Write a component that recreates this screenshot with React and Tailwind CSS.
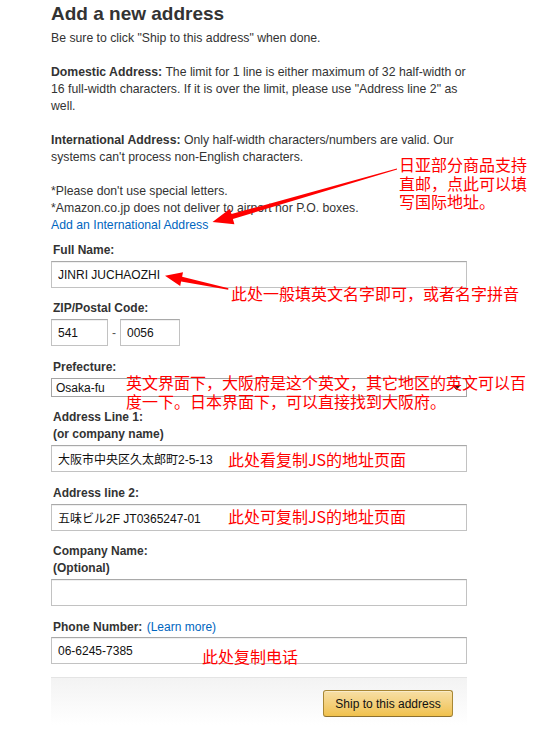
import React from "react";

// label + control block used by every form row
function Field({ label, className = "", children }) {
  return (
    <div className={className}>
      <div className="pl-[2px] text-[12px] font-bold leading-[17px] text-[#333]">{label}</div>
      {children}
    </div>
  );
}

function TextBox({ value, className = "" }) {
  return (
    <input
      readOnly
      value={value}
      className={
        "block h-[27px] border border-[#c2c2c2] border-t-[#a9a9a9] bg-white px-[6px] text-[12px] text-[#111] shadow-[inset_0_1px_0_rgba(0,0,0,0.06)] outline-none " +
        className
      }
    />
  );
}

function Note({ className, children }) {
  return (
    <div
      className={
        "absolute whitespace-nowrap font-['Noto_Sans_CJK_SC',sans-serif] text-[16px] text-[#ff0000] " +
        className
      }
    >
      {children}
    </div>
  );
}

export default function App() {
  return (
    <div className="relative h-[732px] w-[542px] overflow-hidden bg-white font-['Liberation_Sans','Noto_Sans_CJK_JP',sans-serif] text-[#333]">
      <div className="ml-[51px] w-[416px]">
        <h1 className="text-[19px] font-bold leading-[28px] text-[#333]">Add a new address</h1>
        <p className="mt-[2px] text-[12.25px] leading-[17px]">
          Be sure to click "Ship to this address" when done.
        </p>
        <p className="mt-[17px] text-[12.25px] leading-[17px]">
          <b>Domestic Address:</b> The limit for 1 line is either maximum of 32 half-width or 16
          full-width characters. If it is over the limit, please use "Address line 2" as well.
        </p>
        <p className="mt-[17px] text-[12.25px] leading-[17px]">
          <b>International Address:</b> Only half-width characters/numbers are valid. Our systems
          can't process non-English characters.
        </p>
        <div className="mt-[17px] text-[12.25px] leading-[17px]">
          <div>*Please don't use special letters.</div>
          <div>*Amazon.co.jp does not deliver to airport nor P.O. boxes.</div>
          <a href="#" className="text-[#0066c0]">Add an International Address</a>
        </div>

        <Field label="Full Name:" className="mt-[8px]">
          <TextBox value="JINRI JUCHAOZHI" className="mt-[2px] w-full" />
        </Field>

        <Field label="ZIP/Postal Code:" className="mt-[12px]">
          <div className="mt-[2px] flex items-center">
            <TextBox value="541" className="w-[57px]" />
            <span className="mx-[4px] text-[12px] text-[#555]">-</span>
            <TextBox value="0056" className="w-[60px]" />
          </div>
        </Field>

        <Field label="Prefecture:" className="mt-[13px]">
          <div className="relative mt-[2px] flex h-[19px] w-full items-center border border-[#a5a5a5] bg-white pl-[4px] text-[12px] text-[#111]">
            Osaka-fu
            <svg className="absolute right-[6px] top-[7px]" width="7" height="4" viewBox="0 0 7 4">
              <path d="M0 0h7L3.5 4z" fill="#222" />
            </svg>
          </div>
        </Field>

        <Field
          label={
            <>
              Address Line 1:
              <br />
              (or company name)
            </>
          }
          className="mt-[12px]"
        >
          <TextBox value="大阪市中央区久太郎町2-5-13" className="mt-[2px] w-full" />
        </Field>

        <Field label="Address line 2:" className="mt-[13px]">
          <TextBox value="五味ビル2F JT0365247-01" className="mt-[2px] w-full" />
        </Field>

        <Field
          label={
            <>
              Company Name:
              <br />
              (Optional)
            </>
          }
          className="mt-[12px]"
        >
          <TextBox value="" className="mt-[2px] w-full" />
        </Field>

        <Field
          label={
            <>
              Phone Number:{" "}
              <a href="#" className="ml-[1px] font-normal text-[#0066c0]">
                (Learn more)
              </a>
            </>
          }
          className="mt-[13px]"
        >
          <TextBox value="06-6245-7385" className="mt-[1px] w-full" />
        </Field>

        <div className="mt-[13px] flex justify-end border-t border-[#e4e4e4] bg-linear-to-b from-[#f3f3f3] to-white pb-[8px] pr-[14px] pt-[12px]">
          <button className="h-[27px] w-[130px] rounded-[3px] border border-[#a88734] border-b-[#8c7030] bg-linear-to-b from-[#f7dfa5] to-[#f0c14b] text-[12px] text-[#111] shadow-[inset_0_1px_0_rgba(255,255,255,0.4)]">
            Ship to this address
          </button>
        </div>
      </div>

      {/* red hand-drawn annotations */}
      <svg className="pointer-events-none absolute inset-0" width="542" height="732" viewBox="0 0 542 732">
        <polygon
          points="397.1,169.6 232.9,218.9 234.4,224.2 212.5,222 230,208.8 231.5,214.1 396.9,168.4"
          fill="#ff0000"
        />
        <polygon
          points="228.2,289.7 181.1,281.6 180.2,286.0 165,275.7 183.0,272.3 182.1,276.8 228.4,288.3"
          fill="#ff0000"
        />
      </svg>

      <Note className="left-[399px] top-[155px] leading-[18.5px]">
        日亚部分商品支持
        <br />
        直邮，点此可以填
        <br />
        写国际地址。
      </Note>
      <Note className="left-[231px] top-[284px] leading-[19px]">此处一般填英文名字即可，或者名字拼音</Note>
      <Note className="left-[126px] top-[373px] leading-[19px]">
        英文界面下，大阪府是这个英文，其它地区的英文可以百
        <br />
        度一下。日本界面下，可以直接找到大阪府。
      </Note>
      <Note className="left-[228px] top-[450px] leading-[19px]">此处看复制JS的地址页面</Note>
      <Note className="left-[228px] top-[507px] leading-[19px]">此处可复制JS的地址页面</Note>
      <Note className="left-[202px] top-[647px] leading-[19px]">此处复制电话</Note>
    </div>
  );
}
